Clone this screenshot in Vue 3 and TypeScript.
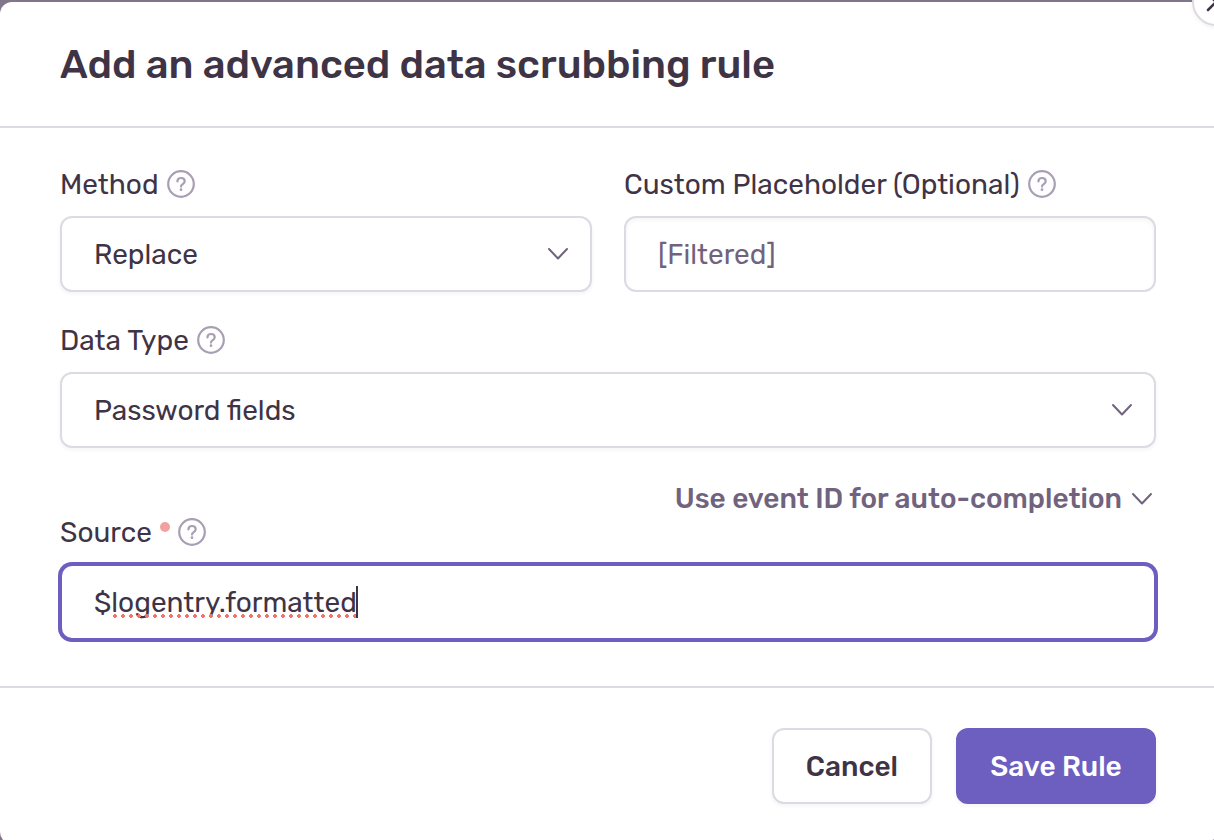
<script setup lang="ts">
import { computed, onMounted, ref } from 'vue'

const methods = ['Replace', 'Mask', 'Hash', 'Remove']
const dataTypes = ['Password fields', 'Credit card numbers', 'IP addresses', 'Email addresses']

const method = ref('Replace')
const placeholder = ref('')
const dataType = ref('Password fields')
const source = ref('$logentry.formatted')

const sourceInput = ref<HTMLInputElement | null>(null)
const prefixWidth = ref(0)
const wordWidth = ref(0)

const prefix = computed(() => (source.value.startsWith('$') ? '$' : ''))

function measure() {
  const input = sourceInput.value
  const context = document.createElement('canvas').getContext('2d')
  if (!input || !context) return
  const style = getComputedStyle(input)
  context.font = `${style.fontWeight} ${style.fontSize} ${style.fontFamily}`
  prefixWidth.value = Math.floor(context.measureText(prefix.value).width)
  wordWidth.value = Math.floor(context.measureText(source.value).width) - prefixWidth.value
}

onMounted(measure)
</script>

<template>
  <div class="backdrop">
    <form class="modal" role="dialog" aria-labelledby="modal-title" @submit.prevent>
      <button class="close" type="button" aria-label="Close">
        <svg viewBox="0 0 20 20" aria-hidden="true"><path d="M2 2 18 18M18 2 2 18" /></svg>
      </button>

      <header class="header">
        <h1 id="modal-title">Add an advanced data scrubbing rule</h1>
      </header>

      <div class="body">
        <div class="row">
          <div class="field">
            <div class="label-line">
              <label for="method">Method</label>
              <svg class="help" viewBox="0 0 28 28" aria-hidden="true">
                <circle cx="14" cy="14" r="12.8" />
                <path d="M10.4 11.4C10.4 9.2 11.9 8 14 8s3.7 1.3 3.7 3.3c0 2.9-3.7 2.7-3.7 5.3" />
                <circle class="point" cx="14" cy="19.7" r="1.4" />
              </svg>
            </div>
            <div class="select-box">
              <select id="method" v-model="method" class="control">
                <option v-for="item in methods" :key="item">{{ item }}</option>
              </select>
              <svg class="chevron" viewBox="0 0 22 14" aria-hidden="true"><path d="M2 2 11 11.5 20 2" /></svg>
            </div>
          </div>

          <div class="field">
            <div class="label-line">
              <label for="placeholder">Custom Placeholder (Optional)</label>
              <svg class="help" viewBox="0 0 28 28" aria-hidden="true">
                <circle cx="14" cy="14" r="12.8" />
                <path d="M10.4 11.4C10.4 9.2 11.9 8 14 8s3.7 1.3 3.7 3.3c0 2.9-3.7 2.7-3.7 5.3" />
                <circle class="point" cx="14" cy="19.7" r="1.4" />
              </svg>
            </div>
            <input id="placeholder" v-model="placeholder" class="control inset" type="text" placeholder="[Filtered]" />
          </div>
        </div>

        <div class="field">
          <div class="label-line">
            <label for="data-type">Data Type</label>
            <svg class="help" viewBox="0 0 28 28" aria-hidden="true">
              <circle cx="14" cy="14" r="12.8" />
              <path d="M10.4 11.4C10.4 9.2 11.9 8 14 8s3.7 1.3 3.7 3.3c0 2.9-3.7 2.7-3.7 5.3" />
              <circle class="point" cx="14" cy="19.7" r="1.4" />
            </svg>
          </div>
          <div class="select-box">
            <select id="data-type" v-model="dataType" class="control">
              <option v-for="item in dataTypes" :key="item">{{ item }}</option>
            </select>
            <svg class="chevron" viewBox="0 0 22 14" aria-hidden="true"><path d="M2 2 11 11.5 20 2" /></svg>
          </div>
        </div>

        <div class="source">
          <button class="toggle" type="button">
            Use event ID for auto-completion
            <svg class="chevron-small" viewBox="0 0 22 14" aria-hidden="true"><path d="M2 2 11 11.5 20 2" /></svg>
          </button>
          <div class="field">
            <div class="label-line">
              <label for="source">Source</label>
              <span class="required" aria-hidden="true"></span>
              <svg class="help" viewBox="0 0 28 28" aria-hidden="true">
                <circle cx="14" cy="14" r="12.8" />
                <path d="M10.4 11.4C10.4 9.2 11.9 8 14 8s3.7 1.3 3.7 3.3c0 2.9-3.7 2.7-3.7 5.3" />
                <circle class="point" cx="14" cy="19.7" r="1.4" />
              </svg>
            </div>
            <div class="source-box">
              <input
                id="source"
                ref="sourceInput"
                v-model="source"
                class="control active"
                type="text"
                required
                spellcheck="false"
                @input="measure"
              />
              <div class="marks" aria-hidden="true">
                <span :style="{ width: prefixWidth + 'px' }"></span>
                <span class="squiggle" :style="{ width: wordWidth + 'px' }"></span>
                <span class="caret"></span>
              </div>
            </div>
          </div>
        </div>
      </div>

      <footer class="footer">
        <button class="button" type="button">Cancel</button>
        <button class="button primary" type="submit">Save Rule</button>
      </footer>
    </form>
  </div>
</template>

<style>
body {
  margin: 0;
}
</style>

<style scoped>
.backdrop {
  box-sizing: border-box;
  height: 100vh;
  padding-top: 2px;
  overflow: hidden;
  background: #80758a;
  color: #3e3446;
  font-family: Rubik, Roboto, "Liberation Sans", sans-serif;
  font-size: 28px;
  line-height: 32px;
}

.modal {
  position: relative;
  margin-right: -2px;
  border-radius: 12px;
  background: #fff;
}

.close {
  position: absolute;
  top: -24px;
  right: -24px;
  display: flex;
  align-items: center;
  justify-content: center;
  box-sizing: border-box;
  width: 48px;
  height: 48px;
  padding: 0;
  border: 2px solid #dddae3;
  border-radius: 50%;
  background: #fff;
  box-shadow: 0 2px 4px rgba(43, 34, 51, 0.05);
}

.close svg {
  width: 20px;
  height: 20px;
  fill: none;
  stroke: #3e3446;
  stroke-width: 2.5;
  stroke-linecap: round;
}

.header {
  padding: 40px 60px 38px;
  border-bottom: 2px solid #dddae3;
}

h1 {
  margin: 0;
  font-size: 40px;
  font-weight: 500;
  line-height: 46px;
}

.body {
  display: flex;
  flex-direction: column;
  gap: 32px;
  padding: 40px 60px 46px;
}

.row {
  display: grid;
  grid-template-columns: 1fr 1fr;
  gap: 32px;
}

.field {
  display: flex;
  flex-direction: column;
  gap: 16px;
}

.label-line {
  display: flex;
  align-items: center;
  gap: 8px;
  height: 32px;
}

label {
  padding-top: 2px;
}

.help {
  width: 28px;
  height: 28px;
  fill: none;
  stroke: #a89fb4;
  stroke-width: 2.2;
  stroke-linecap: round;
}

.help .point {
  fill: #a89fb4;
  stroke: none;
}

.required {
  align-self: flex-start;
  width: 10px;
  height: 10px;
  margin-top: 6px;
  border-radius: 50%;
  background: #f0a1a1;
}

.select-box,
.source-box {
  position: relative;
}

.control {
  display: block;
  box-sizing: border-box;
  width: 100%;
  height: 76px;
  margin: 0;
  padding: 0 32px;
  border: 2px solid #dddae3;
  border-radius: 12px;
  outline: none;
  appearance: none;
  background: #fff;
  color: inherit;
  font: inherit;
  box-shadow: 0 2px 4px rgba(43, 34, 51, 0.05);
}

select.control {
  padding-top: 2px;
}

.control::placeholder {
  color: #71637e;
  opacity: 1;
}

.control.inset {
  box-shadow: inset 0 2px 4px rgba(43, 34, 51, 0.05);
}

.control.active {
  border-color: #6c5fc0;
  box-shadow: 0 0 0 2px #6c5fc0;
  caret-color: transparent;
}

.chevron,
.chevron-small {
  width: 22px;
  height: 14px;
  fill: none;
  stroke: #71637e;
  stroke-width: 2;
  stroke-linecap: round;
  stroke-linejoin: round;
}

.chevron {
  position: absolute;
  top: 31px;
  right: 23px;
  pointer-events: none;
}

.marks {
  position: absolute;
  top: 22px;
  left: 34px;
  display: flex;
  align-items: flex-end;
  height: 32px;
  pointer-events: none;
}

.squiggle {
  height: 4px;
  background: radial-gradient(circle, #f0756c 1px, #f0756c 2px, transparent 2px) 0 0 / 8px 4px repeat-x;
}

.caret {
  width: 2px;
  height: 32px;
  background: #3e3446;
}

.source {
  display: flex;
  flex-direction: column;
}

.toggle {
  display: flex;
  align-items: center;
  align-self: flex-end;
  gap: 9px;
  height: 36px;
  padding: 2px 3px 0;
  border: 0;
  background: none;
  color: #71637e;
  font: inherit;
  font-weight: 500;
}

.footer {
  display: flex;
  justify-content: flex-end;
  gap: 24px;
  padding: 40px 60px;
  border-top: 2px solid #dddae3;
}

.button {
  box-sizing: border-box;
  min-width: 160px;
  height: 76px;
  padding: 2px 32px 0;
  border: 2px solid #dddae3;
  border-radius: 12px;
  background: #fff;
  color: inherit;
  font: inherit;
  font-weight: 500;
  box-shadow: 0 2px 4px rgba(43, 34, 51, 0.05);
}

.button.primary {
  min-width: 200px;
  border-color: #6c5fc0;
  background: #6c5fc0;
  color: #fff;
}
</style>
